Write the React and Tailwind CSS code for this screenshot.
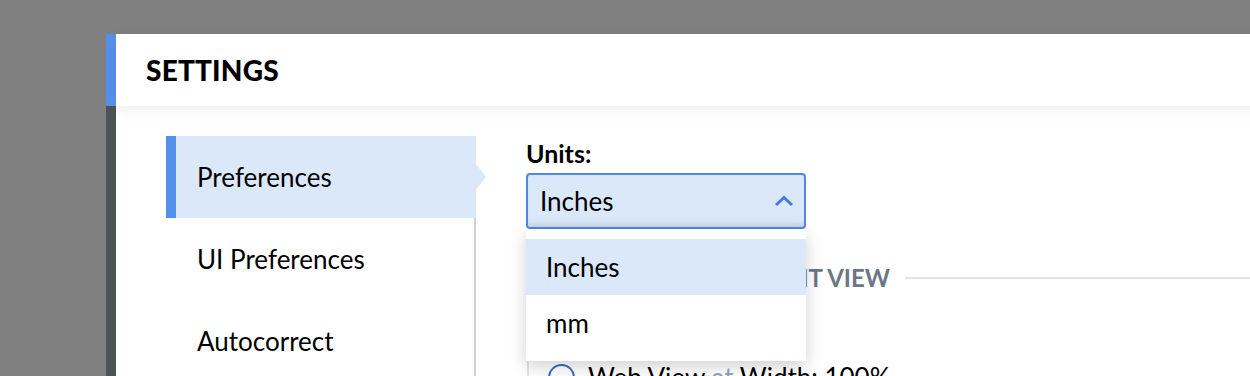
import { useState } from "react";

const menuItems = ["Preferences", "UI Preferences", "Autocorrect"];
const units = ["Inches", "mm"];

const App = () => {
  const [active] = useState("Preferences");
  const [unit] = useState("Inches");

  return (
    <div className="h-[376px] w-[1250px] overflow-hidden bg-[#808080] pt-[34px] pl-[106px] font-['Lato',sans-serif] text-black">
      <div className="flex h-full w-[1300px]">
        {/* accent strip */}
        <div className="flex w-[10px] shrink-0 flex-col">
          <div className="h-[72px] shrink-0 bg-[#5591ec]" />
          <div className="flex-1 bg-[#4f5254]" />
        </div>

        <div className="flex flex-1 flex-col bg-white">
          <div className="relative z-10 flex h-[72px] shrink-0 items-center bg-white pl-[30px] shadow-[0_4px_14px_rgba(0,0,0,0.07)]">
            <h1 className="text-[28px] font-black tracking-[0.2px]">SETTINGS</h1>
          </div>

          <div className="flex flex-1 pt-[30px] pl-[50px]">
            {/* sidebar */}
            <ul className="w-[310px] shrink-0 border-r-2 border-[#d2d2d2]">
              {menuItems.map((item) =>
                item === active ? (
                  <li
                    key={item}
                    className="relative -mr-[2px] flex h-[82px] items-center border-l-[10px] border-[#5591ec] bg-[#dae8fa] pl-[21px] text-[26px]"
                  >
                    {item}
                    <span className="absolute top-1/2 -right-[10px] -mt-[13px] h-0 w-0 border-y-[13px] border-l-[10px] border-y-transparent border-l-[#dae8fa]" />
                  </li>
                ) : (
                  <li key={item} className="flex h-[82px] items-center pl-[31px] text-[26px]">
                    {item}
                  </li>
                )
              )}
            </ul>

            {/* content */}
            <div className="pl-[50px]">
              <label className="block pt-[2px] text-[25px] font-bold leading-[30px]">Units:</label>
              <div className="relative mt-[5px] w-[280px]">
                <div className="flex h-[56px] items-center justify-between rounded-[4px] border-2 border-[#4f88e3] bg-[#dae8fa] pr-[10px] pl-[12px] text-[26px] shadow-[inset_0_-6px_8px_-6px_rgba(0,0,0,0.15)]">
                  <span>{unit}</span>
                  <svg width="20" height="12" viewBox="0 0 20 12" fill="none">
                    <path d="M2 10 L10 2.5 L18 10" stroke="#3f7be0" strokeWidth="3" />
                  </svg>
                </div>
                <ul className="absolute top-full left-0 z-20 w-[280px] bg-white py-[10px] shadow-[0_6px_16px_rgba(0,0,0,0.18)]">
                  {units.map((u) => (
                    <li
                      key={u}
                      className={`flex h-[56px] items-center pl-[20px] text-[26px] ${
                        u === unit ? "bg-[#dae8fa]" : ""
                      }`}
                    >
                      {u}
                    </li>
                  ))}
                </ul>
              </div>

              <fieldset className="mt-[31px] ml-[1px] w-[760px] border-2 border-[#e2e2e2] pt-[13px] pl-[19px]">
                <legend className="w-[357px] text-[24px] font-bold text-[#6b7787]">
                  <div className="pr-[15px] text-right">PORTRAIT VIEW</div>
                </legend>
                <div className="flex flex-col gap-[23px]">
                  <label className="flex h-[30px] items-center gap-[13px] text-[26px]">
                    <span className="h-[27px] w-[27px] rounded-full border-2 border-[#3a6fc4]" />
                    <span>Page View</span>
                  </label>
                  <label className="flex h-[30px] items-center gap-[13px] text-[26px]">
                    <span className="h-[27px] w-[27px] rounded-full border-2 border-[#3a6fc4]" />
                    <span>
                      Web View <span className="text-[#8fa3bc]">at</span> Width: 100%
                    </span>
                  </label>
                </div>
              </fieldset>
            </div>
          </div>
        </div>
      </div>
    </div>
  );
};

export default App;
